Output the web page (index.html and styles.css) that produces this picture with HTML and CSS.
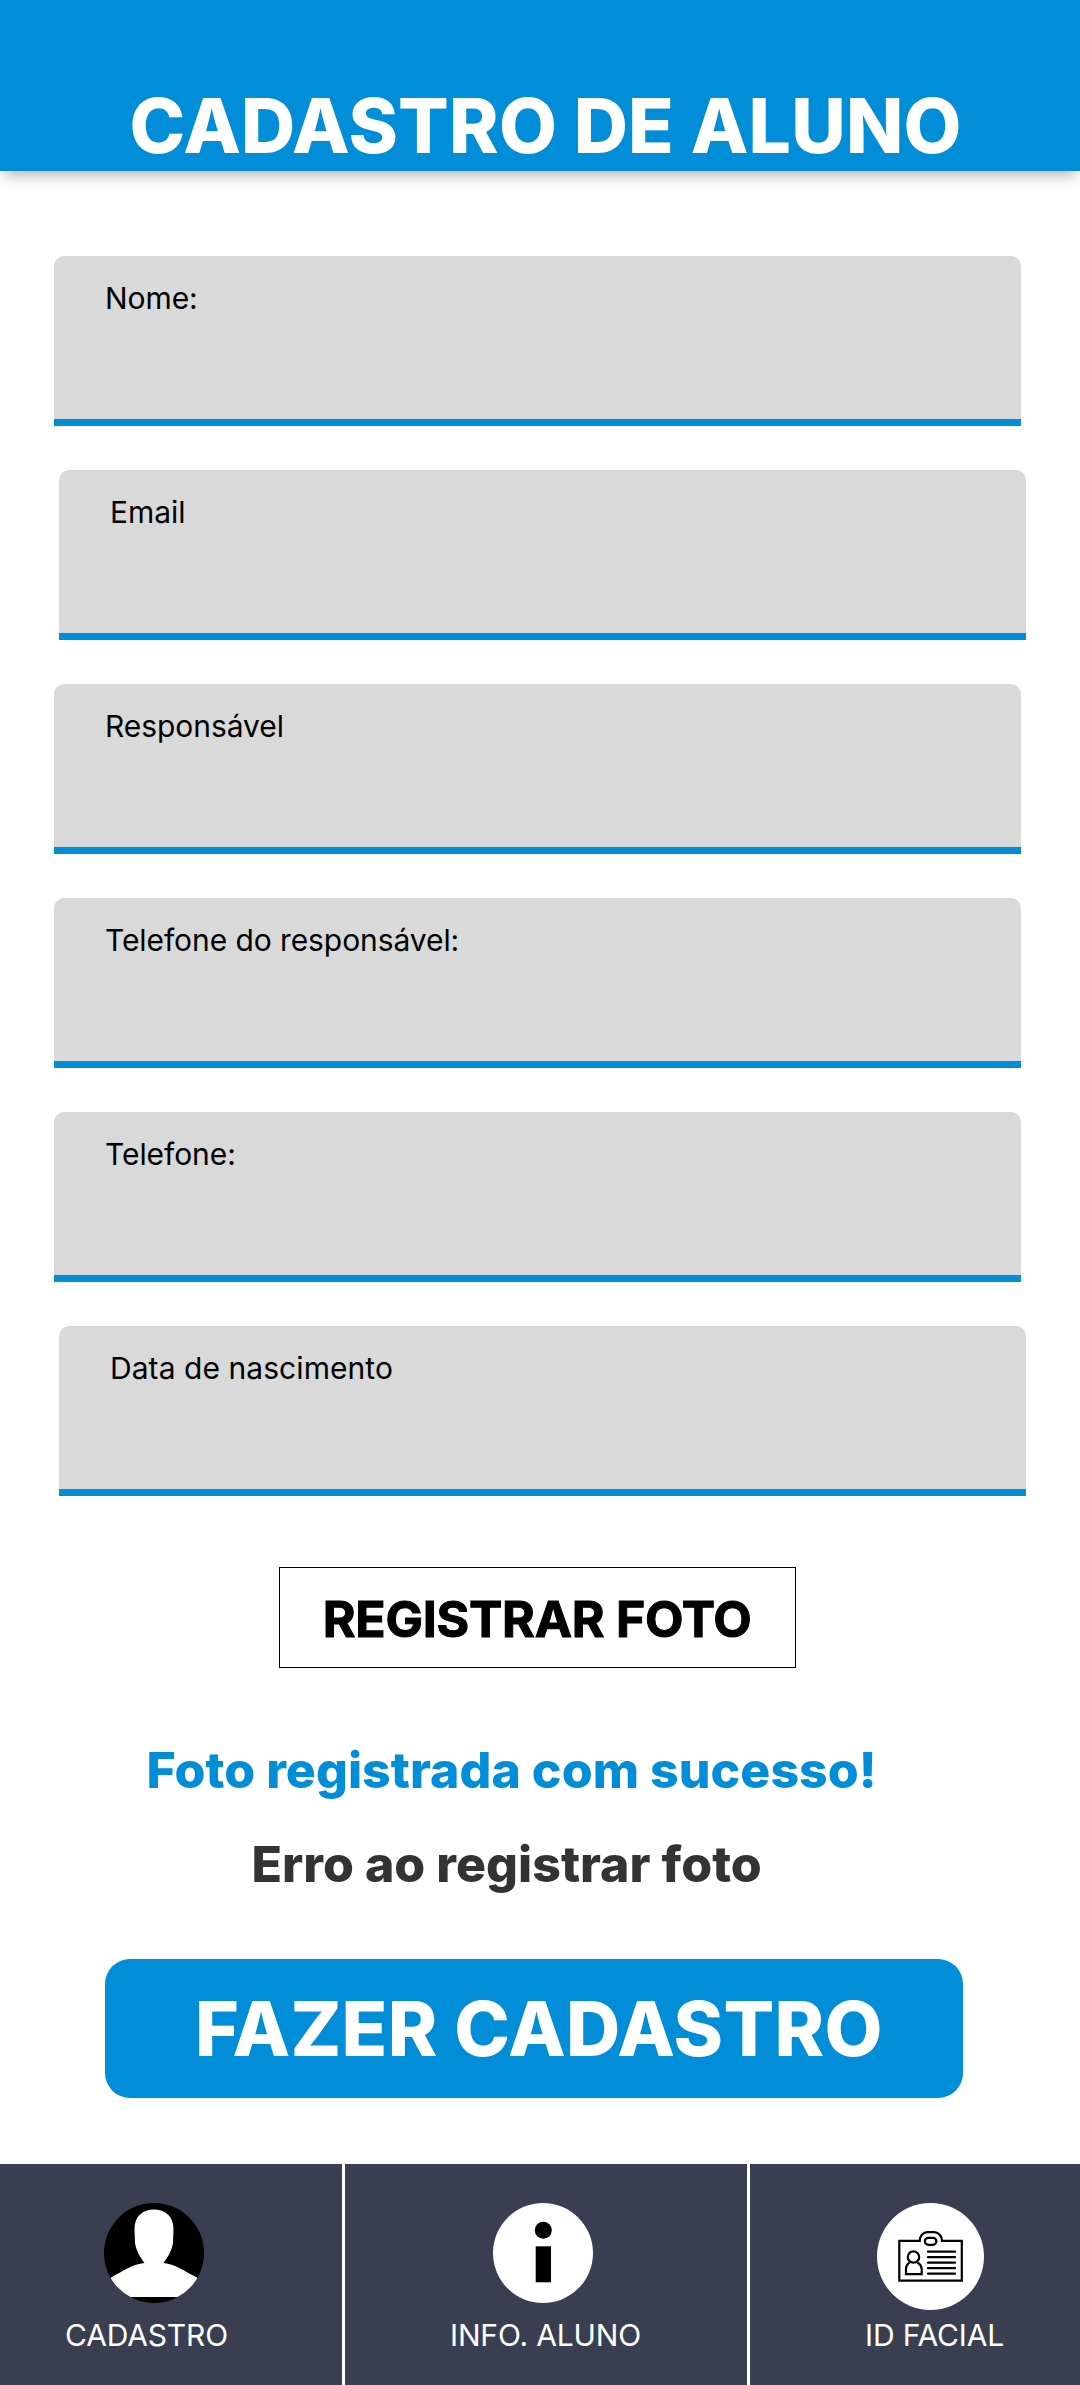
FILE: index.html
```html
<!DOCTYPE html>
<html lang="pt-BR">
<head>
<meta charset="utf-8">
<title>Cadastro de aluno</title>
<link rel="stylesheet" href="styles.css">
</head>
<body>
<header class="header"><h1 class="title">CADASTRO DE ALUNO</h1></header>
<main class="main">
  <form class="form">
    <label class="field">Nome:</label>
    <label class="field field-shifted">Email</label>
    <label class="field">Responsável</label>
    <label class="field field-guardian-phone">Telefone do responsável:</label>
    <label class="field">Telefone:</label>
    <label class="field field-shifted field-birth">Data de nascimento</label>
  </form>
  <button class="photo-button" type="button">REGISTRAR FOTO</button>
  <p class="message success">Foto registrada com sucesso!</p>
  <p class="message error">Erro ao registrar foto</p>
  <button class="submit" type="button">FAZER CADASTRO</button>
</main>
<nav class="nav">
  <a class="tab tab-register">
    <svg class="icon" viewBox="0 0 100 100">
      <clipPath id="avatar"><circle cx="50" cy="50" r="50"/></clipPath>
      <circle cx="50" cy="50" r="50"/>
      <path clip-path="url(#avatar)" fill="#fff" d="M50 6.500C61 6.500 69.500 13 69.500 26L69 40C68 47 64 54 59.500 60C71 61 80 68 93 74.500L100 94H0L7 74.500C19 68 29 61 40.500 60C36 54 32 47 31 40L30.500 26C30.500 13 39 6.500 50 6.500Z"/>
    </svg>
    <span class="tab-label">CADASTRO</span>
  </a>
  <a class="tab tab-info">
    <svg class="icon" viewBox="0 0 100 100">
      <circle cx="50" cy="50" r="50" fill="#fff"/>
      <circle cx="50.300" cy="27.300" r="8.500"/>
      <path d="M42.700 43.300H58V79.300H42.700Z"/>
    </svg>
    <span class="tab-label">INFO. ALUNO</span>
  </a>
  <a class="tab tab-face">
    <svg class="icon icon-large" viewBox="0 0 107 107">
      <circle cx="53.500" cy="53.500" r="53.500" fill="#fff"/>
      <g fill="none" stroke="#000" stroke-width="2.200">
        <path d="M22.300 37.800H42.700C42.700 33 46 29.200 50.500 29.200H57C61.500 29.200 65 33 65 37.800H84.800V77.700H22.300Z"/>
        <rect x="47.800" y="34.800" width="11.600" height="7" rx="3.500"/>
        <circle cx="36.500" cy="54" r="5.700"/>
        <path d="M32.700 59.500C30.200 61 29 63.500 29 66.500V71.200H44.700V66.500C44.700 63.500 43 61 40.300 59.500"/>
        <path stroke-linecap="round" d="M51 48.700H78M51 54.200H78M51 59.700H78M51 65.200H78M51 70.700H78"/>
      </g>
    </svg>
    <span class="tab-label">ID FACIAL</span>
  </a>
</nav>
</body>
</html>
```
FILE: styles.css
```css
* { box-sizing: border-box; }

body {
  margin: 0;
  width: 1080px;
  height: 2385px;
  display: flex;
  flex-direction: column;
  background: #fff;
  color: #000;
  font-family: Inter, sans-serif;
}

.header {
  height: 171px;
  padding: 80px 0 0 129.500px;
  background: #018dd7;
  box-shadow: 0 9px 13px -4px rgba(0, 0, 0, 0.28);
}

.title {
  margin: 0;
  font-size: 75px;
  font-weight: 800;
  line-height: 91px;
  letter-spacing: 0.2px;
  white-space: nowrap;
}

.title, .submit { color: #fff; }

.main {
  flex: 1;
  display: flex;
  flex-direction: column;
  align-items: flex-start;
  padding-top: 85px;
}

.form {
  display: flex;
  flex-direction: column;
  gap: 44px;
  padding-left: 54px;
}

.field {
  width: 967px;
  height: 170px;
  padding: 24px 51px;
  background: linear-gradient(#d9d9d9 163px, #018dd7 163px);
  border-radius: 10px 10px 0 0;
  font-size: 30px;
  line-height: 36px;
  letter-spacing: -0.06px;
}

.field-shifted { margin: 0 -5px 0 5px; }
.field-guardian-phone { letter-spacing: -0.08px; }
.field-birth { letter-spacing: 0.06px; }

button {
  padding: 0;
  font-family: inherit;
  text-align: left;
  white-space: nowrap;
}

.photo-button {
  width: 517px;
  height: 101px;
  margin: 71px 0 0 279px;
  padding: 2px 0 0 42.700px;
  border: 1px solid #000;
  background: #fff;
  color: #000;
  font-size: 50px;
  font-weight: 700;
  letter-spacing: -0.250px;
  -webkit-text-stroke: 1px #000;
}

.message {
  margin: 0;
  font-size: 50px;
  font-weight: 800;
  line-height: 60px;
  white-space: nowrap;
}

.success {
  margin: 72px 0 0 146.500px;
  letter-spacing: 0.040px;
  color: #018dd7;
}

.error {
  margin: 34px 0 0 251.500px;
  letter-spacing: 0.040px;
  color: #333;
}

.submit {
  width: 858px;
  height: 139px;
  margin: 65px 0 0 105px;
  padding-left: 90px;
  border: 0;
  border-radius: 25px;
  background: #018dd7;
  font-size: 75px;
  font-weight: 800;
  letter-spacing: 0.300px;
}

.nav {
  height: 221px;
  display: grid;
  grid-template-columns: 342px 402px 330px;
  column-gap: 3px;
  background: linear-gradient(90deg, #393f51 342px, #fff 342px 345px, #393f51 345px 747px, #fff 747px 750px, #393f51 750px);
  color: #fff;
}

.tab {
  display: grid;
  grid-template-rows: 114px 36px;
  justify-items: start;
  padding-top: 39px;
}

.tab-label {
  font-size: 30px;
  line-height: 36px;
  letter-spacing: -0.150px;
  white-space: nowrap;
}

.icon { width: 100px; height: 100px; }
.icon-large { width: 107px; height: 107px; }

.tab-register { padding-left: 65px; }
.tab-register .icon { margin-left: 39px; }
.tab-info { padding-left: 105px; }
.tab-info .icon { margin-left: 43px; }
.tab-face { padding-left: 115px; }
.tab-face .icon { margin-left: 12px; }
```
